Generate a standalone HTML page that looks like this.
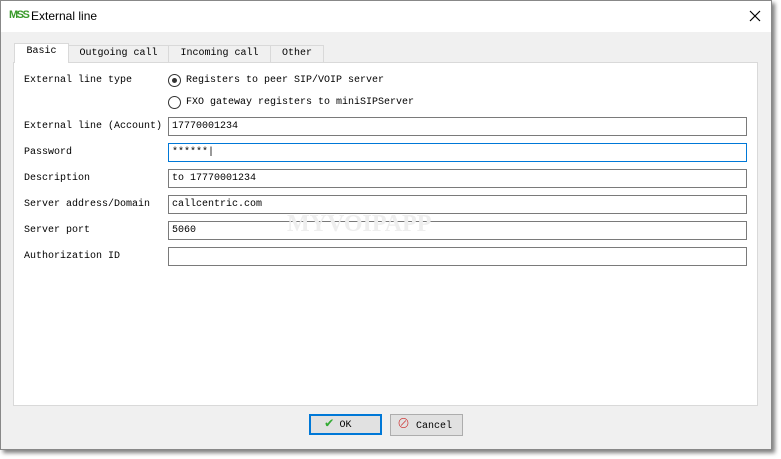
<html><head><style>
body{margin:0;width:781px;height:459px;background:#fff;position:relative;overflow:hidden;font-family:"Liberation Mono","Noto Serif CJK SC",monospace;font-size:10px;color:#000}
.win{position:absolute;left:0;top:0;width:770px;height:448px;background:#f0f0f0;border:1px solid #888;box-shadow:3px 3px 4px rgba(0,0,0,.5)}
.c{position:absolute;left:-1px;top:-1px;width:772px;height:450px}
.title{position:absolute;left:1px;top:1px;width:770px;height:31px;background:#fff}
.a{position:absolute}
.tab{position:absolute;top:45px;height:16px;border:1px solid #d9d9d9;border-bottom:none;background:#f0f0f0;line-height:16px;text-align:center}
.panel{position:absolute;left:13px;top:62px;width:743px;height:342px;background:#fff;border:1px solid #d9d9d9}
.in{position:absolute;left:168px;width:574px;height:17px;border:1px solid #7a7a7a;background:#fff;line-height:17px;padding-left:3px}
.lb{position:absolute;left:24px}
.btn{position:absolute;top:414px;height:20px;border:1px solid #adadad;background:#e1e1e1;line-height:20px}
</style></head><body>
<div class="win"><div class="c">
<div class="title"></div>
<div class="a" style="left:9px;top:9px;font:bold 11px 'Liberation Sans Narrow','Liberation Sans',sans-serif;color:#3a9a2a;letter-spacing:-1.5px">MSS</div>
<div class="a" style="left:31px;top:9px;font:12px 'Liberation Sans',sans-serif">External line</div>
<svg class="a" style="left:749px;top:10px" width="12" height="12"><path d="M1 1L11 11M11 1L1 11" stroke="#000" stroke-width="1.2"/></svg>
<div class="panel"></div>
<div class="tab" style="left:14px;top:43px;width:53px;height:19px;background:#fff;z-index:2">Basic</div>
<div class="tab" style="left:68px;width:99px">Outgoing call</div>
<div class="tab" style="left:168px;width:101px">Incoming call</div>
<div class="tab" style="left:270px;width:52px">Other</div>
<div class="lb" style="top:75px">External line type</div>
<div class="a" style="left:168px;top:74px;width:11px;height:11px;border:1px solid #333;border-radius:50%;background:#fff"><div style="margin:3px;width:5px;height:5px;border-radius:50%;background:#333"></div></div>
<div class="a" style="left:186px;top:75px">Registers to peer SIP/VOIP server</div>
<div class="a" style="left:168px;top:96px;width:11px;height:11px;border:1px solid #333;border-radius:50%;background:#fff"></div>
<div class="a" style="left:186px;top:97px">FXO gateway registers to miniSIPServer</div>
<div class="lb" style="top:121px">External line (Account)</div><div class="in" style="top:117px">17770001234</div>
<div class="lb" style="top:147px">Password</div><div class="in" style="top:143px;border-color:#0078d7">******|</div>
<div class="lb" style="top:173px">Description</div><div class="in" style="top:169px">to 17770001234</div>
<div class="lb" style="top:199px">Server address/Domain</div><div class="in" style="top:195px">callcentric.com</div>
<div class="lb" style="top:225px">Server port</div><div class="in" style="top:221px">5060</div>
<div class="lb" style="top:251px">Authorization ID</div><div class="in" style="top:247px"></div>
<div class="a" style="left:287px;top:211px;font:bold 24px 'Liberation Serif',serif;color:#eee">MYVOIPAPP</div>
<div class="btn" style="left:309px;width:69px;border:2px solid #0078d7;height:17px;line-height:17px"><span style="color:#3a3;font-size:14px;margin-left:14px">✔</span> OK</div>
<div class="btn" style="left:390px;width:71px"><span style="color:#c22;font-size:13px;font-weight:bold;margin-left:6px">⊘</span> Cancel</div>
</div></div>
</body></html>
